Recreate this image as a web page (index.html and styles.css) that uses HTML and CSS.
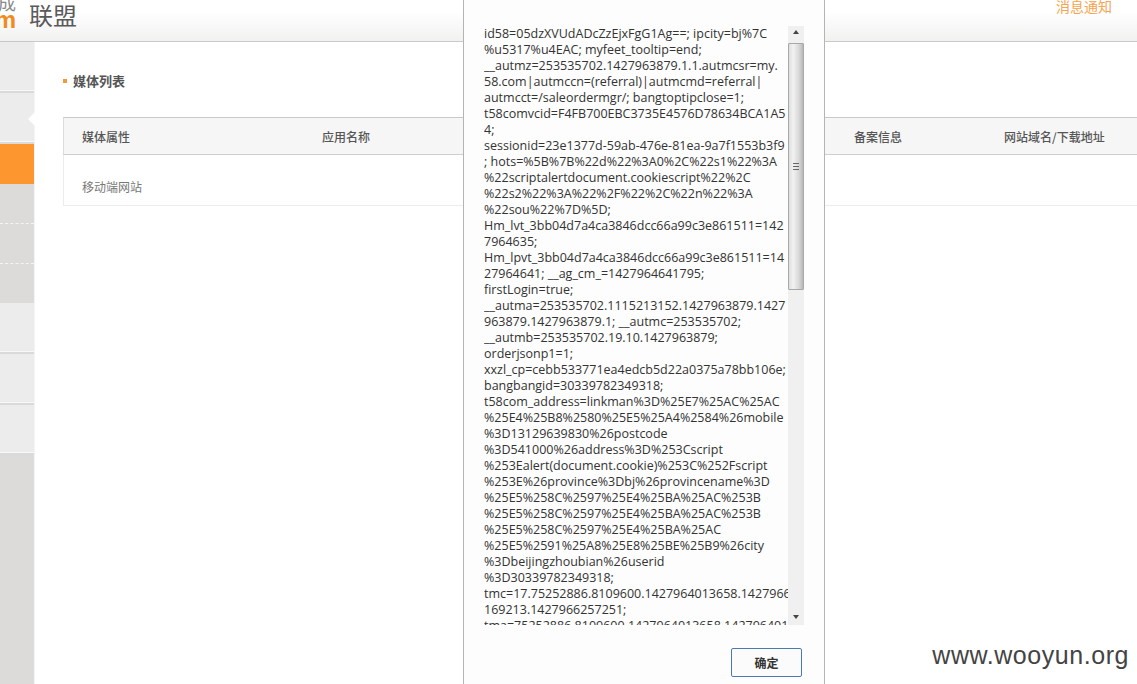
FILE: index.html
```html
<!DOCTYPE html>
<html lang="zh">
<head>
<meta charset="utf-8">
<title>联盟</title>
<link rel="stylesheet" href="styles.css">
</head>
<body>
<div class="page">
  <header class="topbar">
    <div class="logo">
      <div class="logo-mark"><span class="logo-cn">成</span><span class="logo-m">m</span></div>
      <span class="logo-name">联盟</span>
    </div>
    <a class="notice">消息通知</a>
  </header>
  <div class="layout">
    <nav class="side">
      <div class="side-item light"></div>
      <div class="side-item light current"></div>
      <div class="side-item active"></div>
      <div class="side-item sub dashed"></div>
      <div class="side-item sub dashed"></div>
      <div class="side-item sub end"></div>
      <div class="side-item light"></div>
      <div class="side-item light"></div>
      <div class="side-item light last"></div>
    </nav>
    <main class="main">
      <h2 class="title">媒体列表</h2>
      <div class="table">
        <div class="row head">
          <div>媒体属性</div><div>应用名称</div><div>备案信息</div><div>网站域名/下载地址</div>
        </div>
        <div class="row body">
          <div>移动端网站</div><div></div><div></div><div></div>
        </div>
      </div>
    </main>
  </div>
  <section class="modal">
    <div class="scrollbox">
      <div class="cookie">id58=05dzXVUdADcZzEjxFgG1Ag==; ipcity=bj%7C
%u5317%u4EAC; myfeet_tooltip=end;
__autmz=253535702.1427963879.1.1.autmcsr=my.
58.com|autmccn=(referral)|autmcmd=referral|
autmcct=/saleordermgr/; bangtoptipclose=1;
t58comvcid=F4FB700EBC3735E4576D78634BCA1A5
4;
sessionid=23e1377d-59ab-476e-81ea-9a7f1553b3f9
; hots=%5B%7B%22d%22%3A0%2C%22s1%22%3A
%22scriptalertdocument.cookiescript%22%2C
%22s2%22%3A%22%2F%22%2C%22n%22%3A
%22sou%22%7D%5D;
Hm_lvt_3bb04d7a4ca3846dcc66a99c3e861511=142
7964635;
Hm_lpvt_3bb04d7a4ca3846dcc66a99c3e861511=14
27964641; __ag_cm_=1427964641795;
firstLogin=true;
__autma=253535702.1115213152.1427963879.1427
963879.1427963879.1; __autmc=253535702;
__autmb=253535702.19.10.1427963879;
orderjsonp1=1;
xxzl_cp=cebb533771ea4edcb5d22a0375a78bb106e;
bangbangid=30339782349318;
t58com_address=linkman%3D%25E7%25AC%25AC
%25E4%25B8%2580%25E5%25A4%2584%26mobile
%3D13129639830%26postcode
%3D541000%26address%3D%253Cscript
%253Ealert(document.cookie)%253C%252Fscript
%253E%26province%3Dbj%26provincename%3D
%25E5%258C%2597%25E4%25BA%25AC%253B
%25E5%258C%2597%25E4%25BA%25AC%253B
%25E5%258C%2597%25E4%25BA%25AC
%25E5%2591%25A8%25E8%25BE%25B9%26city
%3Dbeijingzhoubian%26userid
%3D30339782349318;
tmc=17.75252886.8109600.1427964013658.1427966
169213.1427966257251;
tma=75252886.8109600.1427964013658.142796401</div>
      <div class="scrollbar">
        <div class="arrow up"></div>
        <div class="thumb"><span class="grip"></span></div>
        <div class="track"></div>
        <div class="arrow down"></div>
      </div>
    </div>
    <div class="actions"><button class="ok">确定</button></div>
  </section>
  <div class="watermark">www.wooyun.org</div>
</div>
</body>
</html>
```
FILE: styles.css
```css
* { box-sizing: border-box; }
html, body { margin: 0; height: 100%; overflow: hidden; background: #fff; }
body { font-family: "Noto Sans CJK SC", "Liberation Sans", sans-serif; color: #555; }
.page { position: relative; width: 1137px; height: 684px; overflow: hidden; display: flex; flex-direction: column; }

.topbar { height: 42px; flex: none; display: flex; justify-content: space-between; border-bottom: 1px solid #c9c9c9; background: linear-gradient(#fff 0, #fff 12px, #f1f1f0 41px); overflow: hidden; }
.logo { display: flex; align-items: flex-start; }
.logo-mark { width: 17px; height: 41px; position: relative; overflow: hidden; }
.logo-cn { position: absolute; right: 1px; top: -7px; font-size: 18px; line-height: 18px; color: #8a8a8a; }
.logo-m { position: absolute; right: 1px; top: 8px; font: bold 24px/24px "Liberation Sans", sans-serif; color: #f08c1e; }
.logo-name { margin: 1px 0 0 12px; font-size: 24px; line-height: 28px; color: #5a5a5a; }
.notice { margin: -3px 25px 0 0; font-size: 14px; line-height: 18px; color: #f6a44f; }

.layout { flex: 1; display: flex; min-height: 0; }
.side { width: 35px; flex: none; background: #dcdbd9; border-right: 1px solid #f4f4f4; display: flex; flex-direction: column; }
.side-item { position: relative; flex: none; }
.light { height: 51px; background: #ececec; border-bottom: 2px solid #dadada; box-shadow: inset 0 -1px 0 #f8f8f8; }
.last { height: 50px; }
.current::after { content: ""; position: absolute; right: -1px; top: 19px; border: 7px solid transparent; border-right-color: #fff; border-left-width: 0; }
.active { height: 40px; background: #fd962e; }
.sub { height: 40px; background: #dcdbd9; }
.end { height: 39px; }
.dashed { border-bottom: 1px dashed #f4f4f4; }

.main { flex: 1; min-width: 0; padding-top: 30px; padding-left: 28px; }
.title { margin: 0; font-size: 13px; line-height: 18px; font-weight: 700; color: #555; display: flex; align-items: center; }
.title::before { content: ""; width: 4px; height: 4px; margin-right: 6px; background: #f09a3e; }
.table { margin-top: 27px; }
.row { display: grid; grid-template-columns: 240px 532px 150px 1fr; }
.row > div { padding-left: 18px; white-space: nowrap; }
.head { height: 38px; align-items: center; background: #f6f6f6; border-top: 1px solid #c9c9c9; border-bottom: 1px solid #cfcfcf; border-left: 1px solid #dcdcdc; font-size: 12px; font-weight: 500; color: #555; }
.body { height: 51px; align-items: center; border-bottom: 1px solid #ececec; border-left: 1px solid #ececec; font-size: 12px; color: #777; }
.body > div { padding-top: 12px; }

.modal { position: absolute; left: 463px; top: 0; bottom: 0; width: 362px; background: #fdfdfd; border-left: 1px solid #b4b4b4; border-right: 1px solid #b4b4b4; padding: 26px 0 0 20px; display: flex; flex-direction: column; }
.scrollbox { height: 599px; width: 320px; display: flex; justify-content: space-between; flex: none; overflow: hidden; }
.cookie { width: 304px; white-space: pre; font: 12.5px/16px "Open Sans", sans-serif; color: #333; overflow: hidden; }
.scrollbar { width: 16px; height: 599px; background: #f0f0f0; display: flex; flex-direction: column; flex: none; }
.arrow { height: 17px; flex: none; position: relative; }
.arrow::after { content: ""; position: absolute; left: 5px; border: 3px solid transparent; border-left-width: 3px; }
.up::after { top: 4px; border-bottom: 4px solid #444; border-top-width: 0; }
.down::after { top: 7px; border-top: 4px solid #444; border-bottom-width: 0; }
.thumb { height: 247px; flex: none; border: 1px solid #a8a8a8; border-radius: 1px; background: linear-gradient(90deg, #dedede, #f2f2f2 30%, #d8d8d8 70%, #b8b8b8); display: flex; align-items: center; justify-content: center; }
.grip { width: 6px; height: 7px; border-top: 1px solid #666; border-bottom: 1px solid #666; background: linear-gradient(#0000 2px, #666 2px, #666 3px, #0000 3px); }
.track { flex: 1; }
.actions { display: flex; justify-content: flex-end; padding: 23px 22px 0 0; }
.ok { width: 71px; height: 29px; padding: 0; font-family: inherit; font-size: 12px; font-weight: 700; color: #333; background: #fbfbfb; border: 1px solid #4a78b8; border-radius: 2px; }

.watermark { position: absolute; right: 8px; top: 641px; font: 25px/28px "Liberation Sans", sans-serif; letter-spacing: 0.55px; color: #444; }
```
